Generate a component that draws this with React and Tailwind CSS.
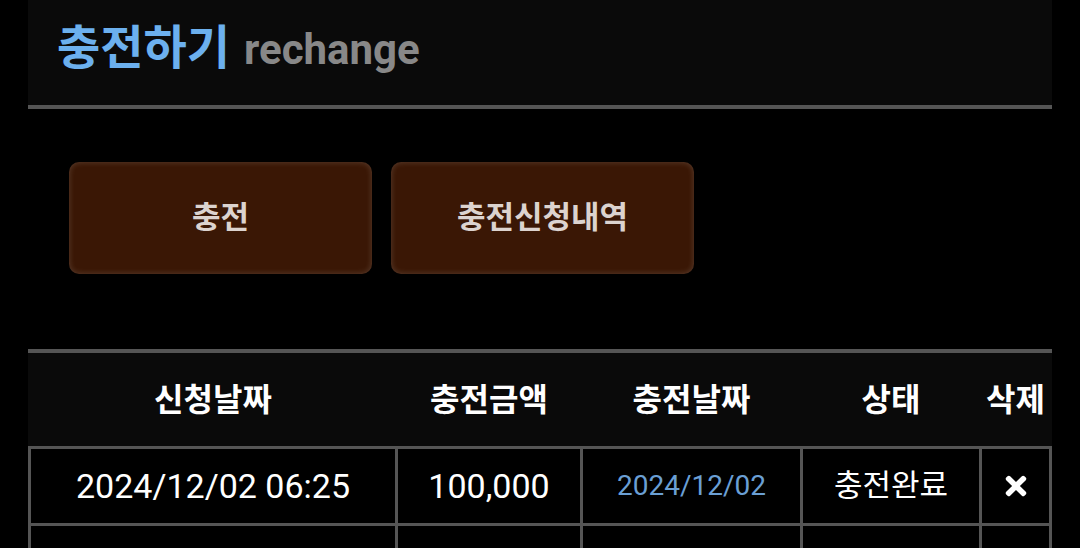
import React from "react";
import { FaTimes } from "react-icons/fa";

const font = { fontFamily: 'Roboto, "Noto Sans CJK KR", sans-serif' };

const cols = "grid grid-cols-[364px_182px_217px_176px_67px] gap-x-[3px]";

const rows = [
  { req: "2024/12/02 06:25", amount: "100,000", done: "2024/12/02", status: "충전완료" },
];

const App = () => {
  return (
    <div className="min-h-screen bg-black text-white" style={font}>
      <div className="mx-[28px]">
        <div className="h-[109px] bg-[#0a0a0a] border-b-4 border-[#555] pl-[29px] pt-[22px]">
          <h1 className="font-bold leading-[52px]">
            <span className="text-[#6cb0ee] text-[47px]">충전하기</span>
            <span className="text-[#888888] text-[42px] ml-[14px]">rechange</span>
          </h1>
        </div>

        <div className="flex gap-[19px] pl-[41px] pt-[53px]">
          <button className="w-[303px] h-[112px] rounded-[10px] bg-[#3a1705] shadow-[inset_0_0_6px_rgba(255,255,255,0.18)] text-[#dcd3cf] text-[31px] font-bold">
            충전
          </button>
          <button className="w-[303px] h-[112px] rounded-[10px] bg-[#3a1705] shadow-[inset_0_0_6px_rgba(255,255,255,0.18)] text-[#dcd3cf] text-[31px] font-bold">
            충전신청내역
          </button>
        </div>

        <div className="mt-[75px] border-t-4 border-[#555]">
          <div className={`${cols} px-[3px] h-[93px] bg-[#0a0a0a] items-center text-center text-[32px] font-bold`}>
            <div>신청날짜</div>
            <div>충전금액</div>
            <div>충전날짜</div>
            <div>상태</div>
            <div>삭제</div>
          </div>
          <div className={`${cols} gap-y-[3px] p-[3px] bg-[#555]`}>
            {rows.map((r, i) => (
              <React.Fragment key={i}>
                <div className="h-[74px] bg-black flex items-center justify-center text-[34px]">{r.req}</div>
                <div className="h-[74px] bg-black flex items-center justify-center text-[34px]">{r.amount}</div>
                <div className="h-[74px] bg-black flex items-center justify-center text-[28px] text-[#6a9fd4]">{r.done}</div>
                <div className="h-[74px] bg-black flex items-center justify-center text-[31px]">{r.status}</div>
                <div className="h-[74px] bg-black flex items-center justify-center">
                  <FaTimes size={30} />
                </div>
              </React.Fragment>
            ))}
            {/* next row, below the fold */}
            <div className="h-[74px] bg-black" />
            <div className="h-[74px] bg-black" />
            <div className="h-[74px] bg-black" />
            <div className="h-[74px] bg-black" />
            <div className="h-[74px] bg-black" />
          </div>
        </div>
      </div>
    </div>
  );
};

export default App;
